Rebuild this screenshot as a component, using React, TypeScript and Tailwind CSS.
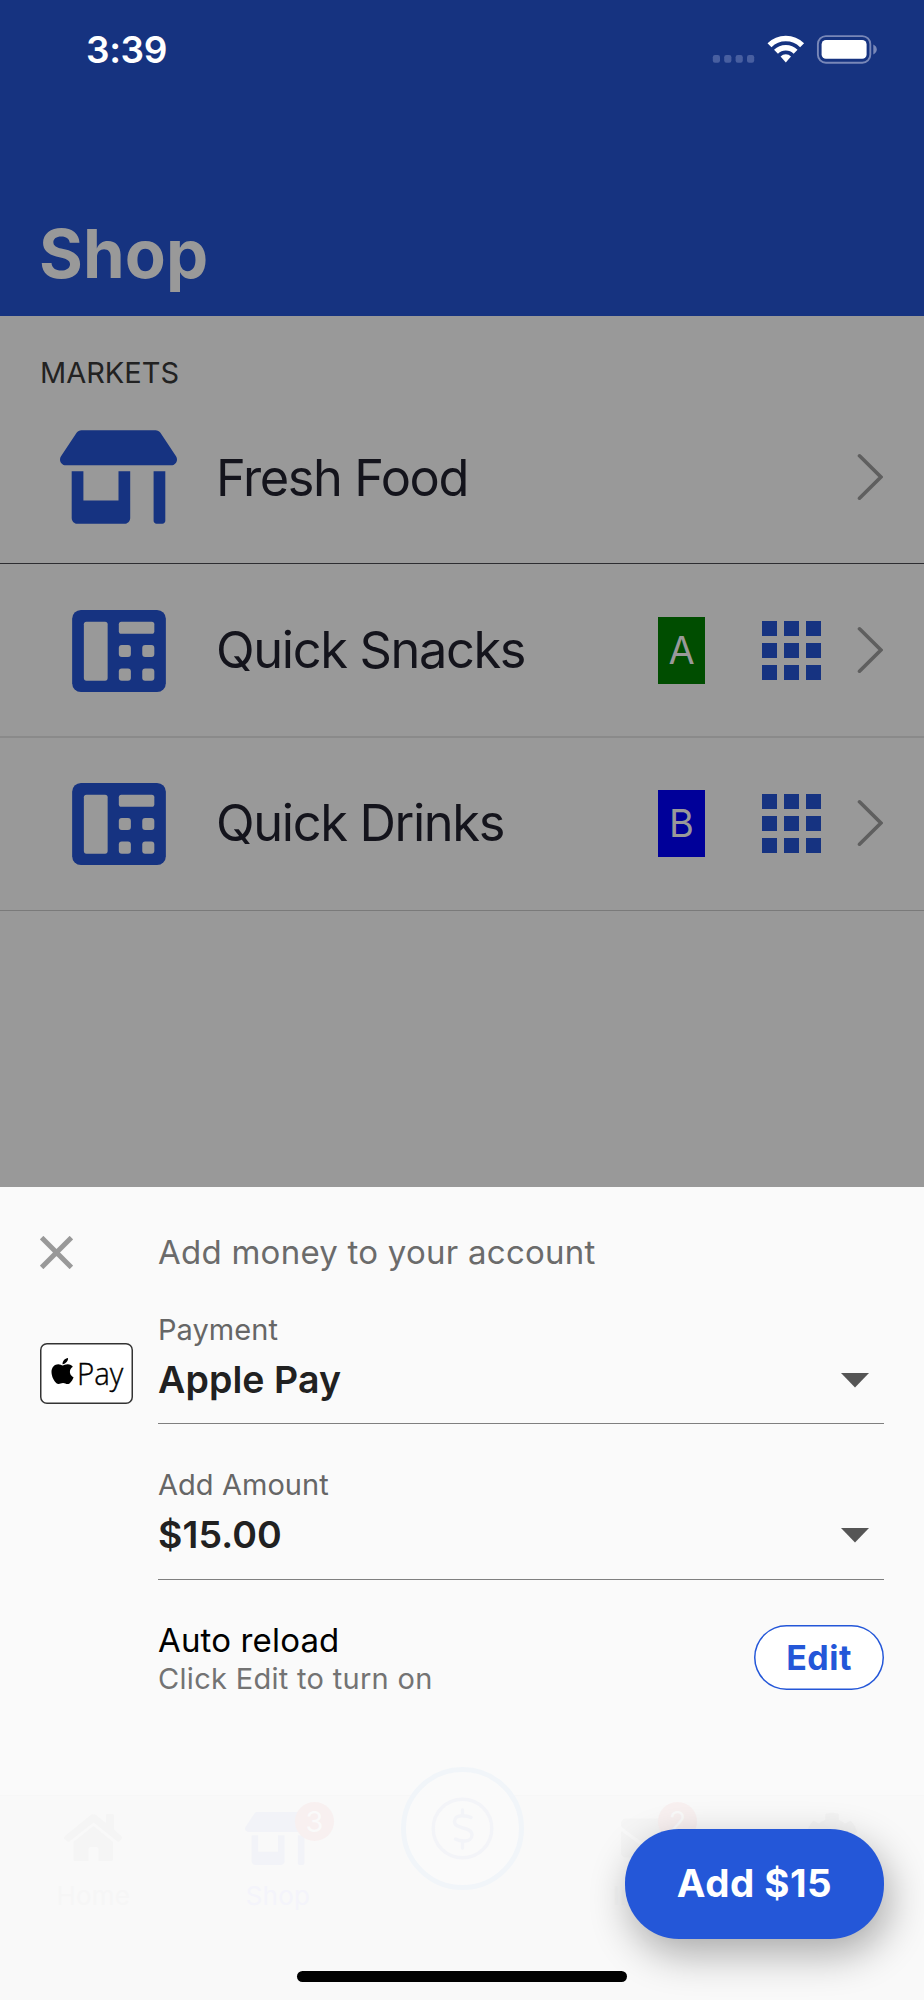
import { FaApple, FaCog, FaEnvelope, FaStoreAlt } from "react-icons/fa";

type Market = { name: string; tag: string; tagClass: string; rowClass: string; iconClass: string };

const snackMarkets: Market[] = [
  { name: "Quick Snacks", tag: "A", tagClass: "bg-[#004d00]", rowClass: "h-[174px] border-b-2 border-[#8a8a8a]", iconClass: "mt-[2px]" },
  { name: "Quick Drinks", tag: "B", tagClass: "bg-[#000099]", rowClass: "h-[173px] border-b border-[#7a7a7a] pb-[2px]", iconClass: "mt-[2px]" },
];

function StatusBar() {
  return (
    <div className="flex h-[98px] items-center justify-between pl-[86px] pr-[47px]">
      <span className="pt-[2px] text-[37px] leading-[46px] font-semibold tracking-[-0.4px] text-white">3:39</span>
      <svg width="165" height="32" viewBox="0 0 165 32" fill="none">
        <g fill="#485fa0">
          <rect x="0.8" y="22" width="7.2" height="7.8" rx="2.2" />
          <rect x="12.2" y="22" width="7.2" height="7.8" rx="2.2" />
          <rect x="23.6" y="22" width="7.2" height="7.8" rx="2.2" />
          <rect x="35" y="22" width="7.2" height="7.8" rx="2.2" />
        </g>
        <g stroke="#fff" strokeWidth="5.6">
          <path d="M57.5 12.2a23 23 0 0 1 32.6 0" />
          <path d="M64 18.8a14 14 0 0 1 19.6 0" />
        </g>
        <path d="M68.6 23.4a7.6 7.6 0 0 1 10.4 0l-5.2 6.2z" fill="#fff" />
        <rect x="105.9" y="3.1" width="52.4" height="26.6" rx="8" stroke="#7988b8" strokeWidth="1.9" />
        <rect x="109.6" y="7" width="45" height="18.8" rx="4.4" fill="#fff" />
        <path d="M161.3 11.6c2.2 1 3.5 2.8 3.5 4.9s-1.3 3.9-3.5 4.9z" fill="#7988b8" />
      </svg>
    </div>
  );
}

function Chevron() {
  return (
    <svg width="26" height="48" viewBox="0 0 26 48" fill="none" className="mr-[41px] shrink-0">
      <path d="M2.5 2.8l21.4 21.2-21.4 21.2" stroke="#5f5f5f" strokeWidth="3.6" strokeLinecap="round" strokeLinejoin="miter" />
    </svg>
  );
}

function VendingIcon({ className }: { className: string }) {
  return (
    <svg width="94" height="82" viewBox="0 0 512 448" className={className}>
      <rect width="512" height="448" rx="48" fill="#163381" />
      <g fill="#999">
        <rect x="64" y="64" width="130" height="322" rx="14" />
        <rect x="255" y="64" width="194" height="66" rx="14" />
        <rect x="255" y="191" width="66" height="66" rx="16" />
        <rect x="383" y="191" width="66" height="66" rx="16" />
        <rect x="255" y="320" width="66" height="66" rx="16" />
        <rect x="383" y="320" width="66" height="66" rx="16" />
      </g>
    </svg>
  );
}

function Keypad() {
  return (
    <div className="mr-[36px] grid grid-cols-3 gap-[7px]">
      {Array.from({ length: 9 }, (_, i) => (
        <div key={i} className="size-[15px] bg-[#163381]" />
      ))}
    </div>
  );
}

function SelectField({ label, value }: { label: string; value: string }) {
  return (
    <div className="flex-1 border-b border-[#7f7f7f]">
      <div className="pt-px text-[29px] leading-[34px] tracking-[0.05px] text-[#666]">{label}</div>
      <div className="mt-[10px] flex items-center justify-between pr-[15px]">
        <span className="text-[37.5px] leading-[46px] font-semibold tracking-[0.1px] text-[#212121]">{value}</span>
        <svg width="28" height="15" viewBox="0 0 28 15">
          <path d="M0 0h28L14 14.5z" fill="#555" />
        </svg>
      </div>
    </div>
  );
}

function TabBar() {
  return (
    <nav className="mt-[97px] grid h-[205px] grid-cols-5 border-t border-[#f7f7f7] bg-[#f9f9f9] pl-px text-[26px] leading-[34px] tracking-[0.2px]">
      <div className="flex flex-col items-center pt-[18px] text-[#f5f5f5]">
        <svg width="58" height="47" viewBox="0 0 58 47" fill="currentColor">
          <path d="M0 24c0-1 .5-1.700 1.300-2.300L26 1.500c2-1.700 4.600-1.700 6.600 0L42 9V1.500C42 .6 42.600 0 43.500 0h5C49.400 0 50 .6 50 1.500v14l7 6.200c1.200 1.100 1.400 2.300.5 3.400l-1.500 1.700c-1 1.100-2.300 1.200-3.400.2L29.500 8.500 6 27c-1.200 1-2.500.9-3.400-.2L.6 25.200A2 2 0 0 1 0 24z" />
          <path d="M29.500 12L49 28v17.500c0 .9-.6 1.500-1.500 1.500H34.500V35.500c0-1.500-.7-2.500-2-2.500h-6c-1.300 0-2 1-2 2.500V47H11.500c-1.300 0-2-.6-2-1.500V28z" />
        </svg>
        <span className="mt-[18px] text-[#f6f6f6]">Home</span>
      </div>
      <div className="flex flex-col items-center pt-[16px] text-[#f2f3f8]">
        <div className="relative">
          <FaStoreAlt className="h-[53px] w-[66px]" />
          <span className="absolute -top-[10px] left-[50px] flex size-[39px] items-center justify-center rounded-full bg-[#f8f0f0] text-[29px] tracking-normal text-[#fafafa]">3</span>
        </div>
        <span className="mt-[14px] text-[#f4f4fb]">Shop</span>
      </div>
      <div className="-mt-[29px] flex justify-center">
        <div className="flex size-[123px] items-center justify-center rounded-full border-[5px] border-[#f1f5f9] bg-[#fafafa]">
          <svg width="63" height="63" viewBox="0 0 63 63" fill="none" stroke="#f3f4f8" strokeWidth="3.4" strokeLinecap="round">
            <circle cx="31.5" cy="31.5" r="29.3" />
            <path d="M31.5 13v5m0 28v5M40 20.500c-2-1.200-5-1.800-9-1.800-5 0-7.500 2.600-7.500 5.800 0 8.500 17.500 4.500 17.500 13.500 0 3.500-3 6-7.500 6-4 0-7-.8-9-2" />
          </svg>
        </div>
      </div>
      <div className="flex flex-col items-center pt-[16px] text-[#f5f5f5]">
        <div className="relative">
          <FaEnvelope className="size-[52px]" />
          <span className="absolute -top-[10px] left-[37px] flex size-[39px] items-center justify-center rounded-full bg-[#f8f0f0] text-[29px] tracking-normal text-[#fafafa]">2</span>
        </div>
        <span className="mt-[15px] text-[#f6f6f6]">Inbox</span>
      </div>
      <div className="flex justify-center pt-[16px] text-[#f4f4f4]">
        <FaCog className="size-[54px]" />
      </div>
    </nav>
  );
}

export default function App() {
  return (
    <div className="flex h-[2000px] w-[924px] flex-col overflow-hidden bg-[#999] font-['Inter',sans-serif]">
      <header className="h-[316px] bg-[#163380]">
        <StatusBar />
        <h1 className="pt-[114px] pl-[39px] text-[67px] leading-[84px] font-bold tracking-[0.1px] text-[#999]">Shop</h1>
      </header>

      {/* Market list, dimmed behind the sheet */}
      <main className="h-[871px]">
        <h2 className="pt-[39px] pl-[40px] text-[29px] leading-[36px] text-[#222]">MARKETS</h2>
        <div className="flex h-[173px] items-center border-b border-[#2d2d31]">
          <FaStoreAlt className="ml-[60px] h-[94px] w-[117px] shrink-0 text-[#163381]" />
          <span className="mt-px ml-[39px] flex-1 text-[50.5px] leading-[60px] tracking-[-1.4px] text-[#14141c]">Fresh Food</span>
          <Chevron />
        </div>
        {snackMarkets.map((m) => (
          <div key={m.name} className={`flex items-center ${m.rowClass}`}>
            <VendingIcon className={`ml-[72px] shrink-0 ${m.iconClass}`} />
            <span className="ml-[50px] flex-1 text-[50.5px] leading-[60px] tracking-[-1.35px] text-[#14141c]">{m.name}</span>
            <span className={`mr-[57px] flex h-[67px] w-[47px] items-center justify-center text-[38px] text-[#999] ${m.tagClass}`}>{m.tag}</span>
            <Keypad />
            <Chevron />
          </div>
        ))}
      </main>

      <section className="relative h-[813px] bg-[#fafafa]">
        <div className="flex h-[88px] items-center pt-[43px] pl-[40px]">
          <button className="w-[118px]">
            <svg width="33" height="33" viewBox="0 0 33 33" fill="none" stroke="#999" strokeWidth="5">
              <path d="M1.6 1.6l29.8 29.8M31.4 1.6L1.6 31.4" />
            </svg>
          </button>
          <span className="text-[33px] leading-[45px] tracking-[0.25px] text-[#6b6b6b]">Add money to your account</span>
        </div>

        <div className="mt-[37px] flex h-[112px] pr-[40px] pl-[40px]">
          <div className="w-[118px] pt-[31px]">
            <div className="flex h-[61px] w-[93px] items-center rounded-[7px] bg-white pl-[11px] text-black shadow-[inset_0_0_0_1.5px_#333]">
              <FaApple className="mb-[6px] h-[30px] w-[23px] shrink-0" />
              <span className="mb-[2px] ml-[3px] origin-left scale-x-[0.92] font-['Open_Sans',sans-serif] text-[32px] leading-[40px] font-light [-webkit-text-stroke:0.4px_#000]">Pay</span>
            </div>
          </div>
          <SelectField label="Payment" value="Apple Pay" />
        </div>

        <div className="mt-[43px] flex h-[113px] pr-[40px] pl-[158px]">
          <SelectField label="Add Amount" value="$15.00" />
        </div>

        <div className="mt-[40px] flex h-[78px] items-start justify-between pr-[40px] pl-[158px]">
          <div>
            <div className="text-[33px] leading-[40px] tracking-[0.15px] text-black">Auto reload</div>
            <div className="text-[29px] leading-[38px] tracking-[0.3px] text-[#737373]">Click Edit to turn on</div>
          </div>
          <button className="mt-[5px] h-[65px] w-[130px] rounded-full bg-white text-[34px] font-bold tracking-[0.5px] text-[#2457d8] shadow-[inset_0_0_0_1.5px_#2457d8]">Edit</button>
        </div>

        <TabBar />

        <button className="absolute top-[642px] right-[40px] h-[110px] w-[259px] rounded-[54px] bg-[#2457d8] text-[38.5px] font-bold tracking-[0.5px] text-white shadow-[5px_15px_40px_rgba(0,0,0,0.32)]">
          Add $15
        </button>
        <div className="absolute bottom-[18px] left-[297px] h-[11px] w-[330px] rounded-full bg-black" />
      </section>
    </div>
  );
}
